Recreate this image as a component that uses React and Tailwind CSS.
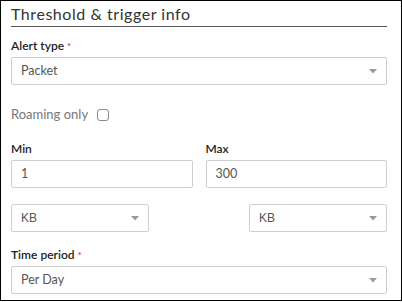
import React from "react";

const Arrow = () => (
  <svg width="8" height="5" viewBox="0 0 8 5" className="shrink-0">
    <path d="M0 0 L8 0 L4 4.5 Z" fill="#9a9a9a" />
  </svg>
);

const Select = ({ value, className = "", mono = false }) => (
  <div
    className={`h-[28px] flex items-center justify-between border border-[#cfcfcf] rounded-[2px] pl-[9px] pr-[9px] bg-white ${className}`}
  >
    <span
      className={`text-[12.5px] text-[#555] ${mono ? "font-['Liberation_Sans',sans-serif] text-[12px]" : ""}`}
    >
      {value}
    </span>
    <Arrow />
  </div>
);

const Input = ({ value }) => (
  <div className="h-[28px] flex items-center border border-[#cfcfcf] rounded-[2px] pl-[9px] bg-white">
    <span className="text-[12.5px] text-[#555]">{value}</span>
  </div>
);

const Label = ({ children, req }) => (
  <div className="h-[16px] leading-[16px] text-[12px] font-semibold text-[#222]">
    {children}
    {req && <span className="text-[#e0433a] text-[10px] align-top ml-[3px]">*</span>}
  </div>
);

export default function App() {
  return (
    <div className="w-[402px] h-[301px] border border-black bg-white font-['Lato',sans-serif] pl-[10px] pr-[14px] overflow-hidden">
      <div className="pt-[3px] pb-[2px] border-b border-[#555]">
        <div className="text-[16px] leading-[20px] tracking-[0.55px] text-[#333]">Threshold &amp; trigger info</div>
      </div>

      <div className="mt-[11px]">
        <Label req>Alert type</Label>
        <Select value="Packet" className="mt-[3px]" />
      </div>

      <div className="mt-[22px] h-[16px] flex items-center gap-[9px]">
        <span className="text-[13px] text-[#777]">Roaming only</span>
        <div className="w-[12px] h-[12px] border border-[#8a8a8a] rounded-[3px]" />
      </div>

      <div className="mt-[18px] grid grid-cols-2 gap-[13px]">
        <div>
          <Label>Min</Label>
          <div className="mt-[3px]">
            <Input value="1" />
          </div>
        </div>
        <div>
          <Label>Max</Label>
          <div className="mt-[3px]">
            <Input value="300" />
          </div>
        </div>
      </div>

      <div className="mt-[16px] flex justify-between">
        <Select value="KB" mono className="w-[138px]" />
        <Select value="KB" mono className="w-[138px]" />
      </div>

      <div className="mt-[15px]">
        <Label req>Time period</Label>
        <Select value="Per Day" className="mt-[3px]" />
      </div>
    </div>
  );
}
